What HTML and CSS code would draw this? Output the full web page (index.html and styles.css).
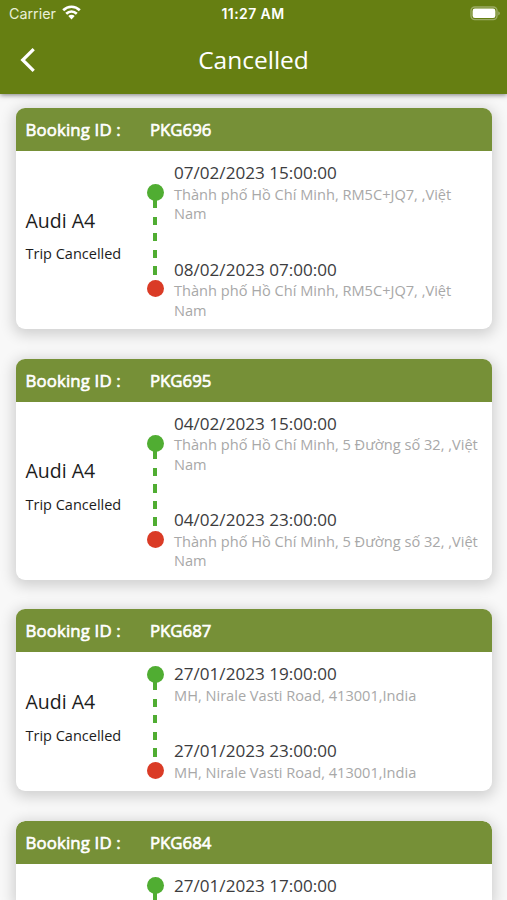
FILE: index.html
```
<!DOCTYPE html>
<html lang="en">
<head>
    <meta charset="UTF-8">
    <meta name="viewport" content="width=device-width, initial-scale=1.0">
    <title>Cancelled</title>
    <link rel="stylesheet" href="styles.css">
</head>
<body>

    <div class="header">
        <div class="statusbar">
            <div class="carrier">
                <span>Carrier</span>
                <svg width="19" height="15" viewBox="0 0 19 15">
                    <g fill="none" stroke="#fff" stroke-width="2.7">
                        <path d="M1.2 5.2C6 .6 13 .6 17.8 5.2" />
                        <path d="M4.2 8.7C7.3 5.8 11.7 5.8 14.8 8.7" />
                    </g>
                    <path fill="#fff" d="M9.5 14.4L6.3 11.1C8.2 9.4 10.8 9.4 12.7 11.1Z" />
                </svg>
            </div>
            <div class="clock">11:27 AM</div>
            <div class="battery">
                <svg width="31" height="15" viewBox="0 0 31 15">
                    <rect x="1" y="1" width="26" height="12.6" rx="3.8" fill="none" stroke="#fff" stroke-opacity=".35" stroke-width="1.4" />
                    <rect x="2.6" y="2.6" width="22.8" height="9.4" rx="2.3" fill="#fff" />
                    <path d="M28.4 5.2C30.2 6 30.2 8.6 28.4 9.4Z" fill="#fff" fill-opacity=".45" />
                </svg>
            </div>
        </div>

        <div class="navbar">
            <a href="#" class="back">
                <svg width="16" height="26" viewBox="0 0 16 26">
                    <path d="M13.7 2.1L2.7 13L13.7 23.9" fill="none" stroke="#fff" stroke-width="3.2" />
                </svg>
            </a>
            <div class="title">Cancelled</div>
        </div>
    </div>

    <div class="list">
        <!-- PKG696 -->
        <div class="card">
            <div class="card-head">
                <span class="label">Booking ID :</span>
                <span>PKG696</span>
            </div>
            <div class="card-body">
                <div class="car">
                    <div class="car-name">Audi A4</div>
                    <div class="car-status">Trip Cancelled</div>
                </div>
                <div class="route">
                    <div class="dot green"></div>
                    <div class="dashes"></div>
                    <div class="dot red"></div>
                </div>
                <div class="stops">
                    <div class="stop">
                        <div class="date">07/02/2023 15:00:00</div>
                        <div class="address">Thành phố Hồ Chí Minh, RM5C+JQ7, ,Việt<br>Nam</div>
                    </div>
                    <div class="stop">
                        <div class="date">08/02/2023 07:00:00</div>
                        <div class="address">Thành phố Hồ Chí Minh, RM5C+JQ7, ,Việt<br>Nam</div>
                    </div>
                </div>
            </div>
        </div>

        <!-- PKG695 -->
        <div class="card">
            <div class="card-head">
                <span class="label">Booking ID :</span>
                <span>PKG695</span>
            </div>
            <div class="card-body">
                <div class="car">
                    <div class="car-name">Audi A4</div>
                    <div class="car-status">Trip Cancelled</div>
                </div>
                <div class="route">
                    <div class="dot green"></div>
                    <div class="dashes"></div>
                    <div class="dot red"></div>
                </div>
                <div class="stops">
                    <div class="stop">
                        <div class="date">04/02/2023 15:00:00</div>
                        <div class="address">Thành phố Hồ Chí Minh, 5 Đường số 32, ,Việt<br>Nam</div>
                    </div>
                    <div class="stop">
                        <div class="date">04/02/2023 23:00:00</div>
                        <div class="address">Thành phố Hồ Chí Minh, 5 Đường số 32, ,Việt<br>Nam</div>
                    </div>
                </div>
            </div>
        </div>

        <!-- PKG687 -->
        <div class="card">
            <div class="card-head">
                <span class="label">Booking ID :</span>
                <span>PKG687</span>
            </div>
            <div class="card-body">
                <div class="car">
                    <div class="car-name">Audi A4</div>
                    <div class="car-status">Trip Cancelled</div>
                </div>
                <div class="route">
                    <div class="dot green"></div>
                    <div class="dashes"></div>
                    <div class="dot red"></div>
                </div>
                <div class="stops">
                    <div class="stop">
                        <div class="date">27/01/2023 19:00:00</div>
                        <div class="address">MH, Nirale Vasti Road, 413001,India</div>
                    </div>
                    <div class="stop">
                        <div class="date">27/01/2023 23:00:00</div>
                        <div class="address">MH, Nirale Vasti Road, 413001,India</div>
                    </div>
                </div>
            </div>
        </div>

        <!-- PKG684 -->
        <div class="card last">
            <div class="card-head">
                <span class="label">Booking ID :</span>
                <span>PKG684</span>
            </div>
            <div class="card-body">
                <div class="car"></div>
                <div class="route">
                    <div class="dot green"></div>
                    <div class="dashes"></div>
                </div>
                <div class="stops">
                    <div class="stop">
                        <div class="date">27/01/2023 17:00:00</div>
                    </div>
                </div>
            </div>
        </div>
    </div>

</body>
</html>
```
FILE: styles.css
```
* {
    box-sizing: border-box;
}

body {
    display: flex;
    flex-direction: column;
    margin: 0;
    height: 900px;
    overflow: hidden;
    background-color: #f8f8f8;
    font-family: "Open Sans", "Noto Sans", sans-serif;
}

.header {
    position: relative;
    z-index: 1;
    flex: none;
    height: 93.5px;
    background-color: #667f12;
    color: #fff;
    box-shadow: 0 1px 5px rgba(0,0,0,0.5);
}

.statusbar {
    display: grid;
    grid-template-columns: 1fr auto 1fr;
    align-items: center;
    height: 27px;
    padding: 0 6px 0 9px;
    font-family: Inter, "Liberation Sans", sans-serif;
    font-size: 14.3px;
}

.carrier {
    display: flex;
    align-items: center;
    gap: 6px;
    color: #e9efd8;
}

    .carrier svg {
        margin-top: -2px;
    }

.clock {
    margin-right: 4px;
    font-size: 14px;
    font-weight: 600;
    letter-spacing: 0.4px;
}

.battery {
    display: flex;
    justify-content: flex-end;
}

.navbar {
    display: grid;
    grid-template-columns: 60px 1fr 60px;
    align-items: center;
    height: 65px;
}

.back {
    display: flex;
    padding-left: 20px;
}

.title {
    text-align: center;
    font-size: 24.5px;
    line-height: 32px;
}

.list {
    display: flex;
    flex: 1;
    flex-direction: column;
    gap: 29.5px;
    min-height: 0;
    padding: 14.8px 15px 0 15.5px;
}

.card {
    flex: none;
    border-radius: 9px;
    background-color: #fff;
    box-shadow: 0 3px 14px 3px rgba(0,0,0,0.16);
}

.card-head {
    display: flex;
    align-items: center;
    height: 43px;
    padding-left: 10px;
    border-radius: 9px 9px 0 0;
    background-color: #769037;
    color: #fff;
    font-size: 16.8px;
    -webkit-text-stroke: 0.65px #fff;
}

.label {
    width: 124.5px;
    letter-spacing: 0.15px;
}

.card-body {
    display: flex;
    align-items: center;
    padding: 10px 0 9px;
}

.car {
    width: 121px;
    padding: 0 0 10px 10px;
    color: #1c1c1c;
}

.car-name {
    font-size: 19.5px;
    line-height: 28px;
}

.car-status {
    margin-top: 8.5px;
    font-size: 14.5px;
    line-height: 22px;
    white-space: nowrap;
}

/* Pickup and drop markers joined by a dashed line */
.route {
    display: flex;
    flex-direction: column;
    align-items: center;
    width: 37px;
    margin-right: 0.5px;
}

.dot {
    width: 17px;
    height: 17px;
    border-radius: 50%;
}

.green {
    background-color: #50ad32;
}

.red {
    background-color: #da3b26;
}

.dashes {
    width: 4px;
    height: 80px;
    margin-top: -1px;
    background: repeating-linear-gradient(#50ad32 0 8.3px, transparent 8.3px 16.6px);
}

.stops {
    display: flex;
    flex-direction: column;
    gap: 34px;
}

.date {
    color: #3c3c3e;
    font-size: 17.1px;
    line-height: 23.5px;
}

.address {
    color: #a8a8a8;
    font-size: 14.6px;
    line-height: 19.5px;
    white-space: nowrap;
}

/* Last card runs to the bottom of the screen */
.last {
    flex: 1;
    min-height: 0;
    overflow: hidden;
    border-radius: 9px 9px 0 0;
}

    .last .card-body {
        align-items: flex-start;
        padding-bottom: 0;
    }

    .last .route {
        padding-top: 3px;
    }

    .last .dashes {
        height: 8.3px;
    }
```
